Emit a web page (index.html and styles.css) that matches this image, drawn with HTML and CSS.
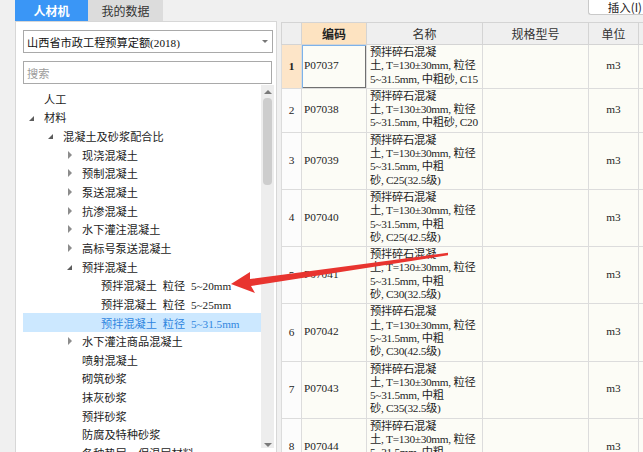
FILE: index.html
```html
<!DOCTYPE html>
<html lang="zh-CN">
<head>
<meta charset="utf-8">
<title>人材机</title>
<link rel="stylesheet" href="styles.css">
</head>
<body>
<div class="app">
  <aside class="left">
    <div class="tabs">
      <div class="tab active">人材机</div>
      <div class="tab other">我的数据</div>
    </div>
    <div class="panel">
      <div class="select"><span>山西省市政工程预算定额(2018)</span><span class="caret"></span></div>
      <div class="search">搜索</div>
      <div class="treewrap">
        <ul class="tree">
          <li class="l1"><span class="arr"></span>人工</li>
          <li class="l1"><span class="arr"><i class="exp"></i></span>材料</li>
          <li class="l2"><span class="arr"><i class="exp"></i></span>混凝土及砂浆配合比</li>
          <li class="l3"><span class="arr"><i class="col"></i></span>现浇混凝土</li>
          <li class="l3"><span class="arr"><i class="col"></i></span>预制混凝土</li>
          <li class="l3"><span class="arr"><i class="col"></i></span>泵送混凝土</li>
          <li class="l3"><span class="arr"><i class="col"></i></span>抗渗混凝土</li>
          <li class="l3"><span class="arr"><i class="col"></i></span>水下灌注混凝土</li>
          <li class="l3"><span class="arr"><i class="col"></i></span>高标号泵送混凝土</li>
          <li class="l3"><span class="arr"><i class="exp"></i></span>预拌混凝土</li>
          <li class="l4"><span class="arr"></span>预拌混凝土 粒径 5~20mm</li>
          <li class="l4"><span class="arr"></span>预拌混凝土 粒径 5~25mm</li>
          <li class="l4 sel"><span class="arr"></span>预拌混凝土 粒径 5~31.5mm</li>
          <li class="l3"><span class="arr"><i class="col"></i></span>水下灌注商品混凝土</li>
          <li class="l3"><span class="arr"></span>喷射混凝土</li>
          <li class="l3"><span class="arr"></span>砌筑砂浆</li>
          <li class="l3"><span class="arr"></span>抹灰砂浆</li>
          <li class="l3"><span class="arr"></span>预拌砂浆</li>
          <li class="l3"><span class="arr"></span>防腐及特种砂浆</li>
          <li class="l3"><span class="arr"></span>各种垫层、保温层材料</li>
        </ul>
        <div class="scroll">
          <i class="up"></i>
          <div class="thumb"></div>
          <i class="down"></i>
        </div>
      </div>
    </div>
  </aside>
  <main class="right">
    <div class="toolbar"><div class="btn">插入(I)</div></div>
    <table class="grid">
      <colgroup>
        <col class="c-n"><col class="c-code"><col class="c-name"><col class="c-spec"><col class="c-unit"><col class="c-more">
      </colgroup>
      <thead>
        <tr><th></th><th class="sel">编码</th><th>名称</th><th>规格型号</th><th>单位</th><th></th></tr>
      </thead>
      <tbody>
        <tr>
          <td class="n sel">1</td><td class="code focus">P07037</td>
          <td class="name">预拌碎石混凝<br>土, T=130±30mm, 粒径<br>5~31.5mm, 中粗砂, C15</td>
          <td></td><td class="u">m3</td><td></td>
        </tr>
        <tr>
          <td class="n">2</td><td class="code">P07038</td>
          <td class="name">预拌碎石混凝<br>土, T=130±30mm, 粒径<br>5~31.5mm, 中粗砂, C20</td>
          <td></td><td class="u">m3</td><td></td>
        </tr>
        <tr>
          <td class="n">3</td><td class="code">P07039</td>
          <td class="name">预拌碎石混凝<br>土, T=130±30mm, 粒径<br>5~31.5mm, 中粗<br>砂, C25(32.5级)</td>
          <td></td><td class="u">m3</td><td></td>
        </tr>
        <tr>
          <td class="n">4</td><td class="code">P07040</td>
          <td class="name">预拌碎石混凝<br>土, T=130±30mm, 粒径<br>5~31.5mm, 中粗<br>砂, C25(42.5级)</td>
          <td></td><td class="u">m3</td><td></td>
        </tr>
        <tr>
          <td class="n">5</td><td class="code">P07041</td>
          <td class="name">预拌碎石混凝<br>土, T=130±30mm, 粒径<br>5~31.5mm, 中粗<br>砂, C30(32.5级)</td>
          <td></td><td class="u">m3</td><td></td>
        </tr>
        <tr>
          <td class="n">6</td><td class="code">P07042</td>
          <td class="name">预拌碎石混凝<br>土, T=130±30mm, 粒径<br>5~31.5mm, 中粗<br>砂, C30(42.5级)</td>
          <td></td><td class="u">m3</td><td></td>
        </tr>
        <tr>
          <td class="n">7</td><td class="code">P07043</td>
          <td class="name">预拌碎石混凝<br>土, T=130±30mm, 粒径<br>5~31.5mm, 中粗<br>砂, C35(32.5级)</td>
          <td></td><td class="u">m3</td><td></td>
        </tr>
        <tr>
          <td class="n">8</td><td class="code">P07044</td>
          <td class="name">预拌碎石混凝<br>土, T=130±30mm, 粒径<br>5~31.5mm, 中粗<br>砂, C35(42.5级)</td>
          <td></td><td class="u">m3</td><td></td>
        </tr>
      </tbody>
    </table>
  </main>
</div>
<svg class="mark" width="643" height="452" viewBox="0 0 643 452">
  <polygon points="231,284 250,272 250,279 448,252.8 448,255.2 251,286 255,293" fill="#e8342f"/>
</svg>
</body>
</html>
```

FILE: styles.css
```css
* { box-sizing: border-box; }
html, body { margin: 0; padding: 0; }
body {
  width: 643px;
  height: 452px;
  overflow: hidden;
  position: relative;
  background: #f0f0f0;
  color: #1c1c1c;
  font-family: "Liberation Serif", "Noto Sans CJK SC", serif;
}
.app { display: flex; height: 452px; }

/* left side */
.left {
  width: 277px;
  flex: none;
  padding-left: 15px;
  display: flex;
  flex-direction: column;
}
.tabs { display: flex; height: 21px; flex: none; }
.tab {
  display: flex;
  align-items: center;
  justify-content: center;
  font-family: "Noto Sans CJK SC", sans-serif;
  font-size: 12px;
}
.tab.active { width: 73px; background: #3a96f6; color: #fff; font-weight: bold; }
.tab.other { width: 75px; background: #dcdcdc; color: #333; }

.panel {
  flex: 1;
  min-height: 0;
  background: #fff;
  border: 1px solid #d7d7d7;
  border-bottom: none;
  padding: 8px 2px 0 7px;
  display: flex;
  flex-direction: column;
}
.select {
  height: 23px;
  width: 250px;
  flex: none;
  border: 1px solid #a9a9a9;
  display: flex;
  align-items: center;
  padding-left: 3px;
  font-size: 11.2px;
  color: #111;
}
.caret {
  margin-left: auto;
  margin-right: 4px;
  width: 0; height: 0;
  border-left: 3px solid transparent;
  border-right: 3px solid transparent;
  border-top: 3px solid #777;
}
.search {
  margin-top: 8px;
  height: 23px;
  width: 249px;
  flex: none;
  border: 1px solid #a9a9a9;
  display: flex;
  align-items: center;
  padding-left: 3px;
  font-family: "Noto Sans CJK SC", sans-serif;
  font-size: 11.2px;
  color: #9c9c9c;
}
.treewrap {
  flex: 1;
  min-height: 0;
  margin-top: 1px;
  display: flex;
  overflow: hidden;
}
.tree {
  list-style: none;
  margin: 0;
  padding: 4.3px 0 0 0;
  width: 238px;
  flex: none;
}
.tree li {
  height: 18.67px;
  display: flex;
  align-items: center;
  font-size: 11.2px;
  white-space: nowrap;
  word-spacing: 3px;
  color: #1c1c1c;
}
.tree li.l1 { padding-left: 5px; }
.tree li.l2 { padding-left: 24px; }
.tree li.l3 { padding-left: 43px; }
.tree li.l4 { padding-left: 62px; }
.tree li.sel { background: #cce8ff; color: #2f86e0; }
.arr {
  width: 16px;
  height: 18px;
  flex: none;
  display: flex;
  align-items: center;
}
.arr .exp {
  width: 0; height: 0;
  margin-left: 1px;
  margin-top: 2px;
  border-left: 5px solid transparent;
  border-bottom: 5px solid #5c5c5c;
}
.arr .col {
  width: 0; height: 0;
  margin-left: 2px;
  border-top: 4px solid transparent;
  border-bottom: 4px solid transparent;
  border-left: 4px solid #8c8c8c;
}
.scroll {
  width: 13px;
  height: 363px;
  flex: none;
  background: #ededed;
  display: flex;
  flex-direction: column;
  align-items: center;
}
.scroll .up {
  margin-top: 5px;
  width: 0; height: 0;
  border-left: 4px solid transparent;
  border-right: 4px solid transparent;
  border-bottom: 4px solid #7a7a7a;
}
.scroll .thumb {
  margin-top: 4px;
  width: 9px;
  height: 87px;
  border-radius: 4px;
  background: #cdcdcd;
}
.scroll .down {
  margin-top: auto;
  margin-bottom: 1px;
  width: 0; height: 0;
  border-left: 4px solid transparent;
  border-right: 4px solid transparent;
  border-top: 4px solid #7a7a7a;
}

/* right side */
.right {
  flex: 1;
  min-width: 0;
  display: flex;
  flex-direction: column;
  padding-left: 4px;
  overflow: hidden;
}
.toolbar {
  height: 22px;
  flex: none;
  display: flex;
  justify-content: flex-end;
  align-items: flex-start;
}
.btn {
  width: 55px;
  height: 16px;
  margin-top: -1px;
  background: #fff;
  border: 1px solid #c9c9c9;
  border-right: none;
  border-radius: 0 0 0 3px;
  font-family: "Noto Sans CJK SC", sans-serif;
  font-size: 11.5px;
  line-height: 14px;
  text-align: right;
  padding-right: 1px;
  color: #222;
  white-space: nowrap;
}
.grid {
  border-collapse: collapse;
  table-layout: fixed;
  width: 437px;
  flex: none;
}
.c-n { width: 20px; }
.c-code { width: 65px; }
.c-name { width: 116px; }
.c-spec { width: 106px; }
.c-unit { width: 50px; }
.c-more { width: 80px; }
.grid th {
  height: 22px;
  padding: 0;
  background: #efefef;
  border: 1px solid #d4d4d4;
  font-family: "Noto Sans CJK SC", sans-serif;
  font-size: 12px;
  font-weight: normal;
  color: #333;
}
.grid th.sel { background: #fde3c1; font-weight: bold; color: #222; }
.grid td {
  border: 1px solid #dcdcdc;
  background: #fcfcf6;
  font-size: 11.3px;
  line-height: 13.3px;
  padding: 1px 3px 2px;
  vertical-align: middle;
  color: #1e1e1e;
  white-space: nowrap;
  overflow: hidden;
}
.grid td.n { text-align: center; padding: 0; background: #fcfcfc; }
.grid td.n.sel { background: #fde5c8; font-weight: bold; }
.grid td.code { padding-left: 2px; }
.grid td.focus { box-shadow: inset 1px 1px 0 #7cb2ea, inset -1px -1px 0 #707070; }
.grid td.name { vertical-align: top; letter-spacing: -0.3px; }
.grid td.u { text-align: center; }

.mark {
  position: absolute;
  left: 0;
  top: 0;
  pointer-events: none;
}
```
